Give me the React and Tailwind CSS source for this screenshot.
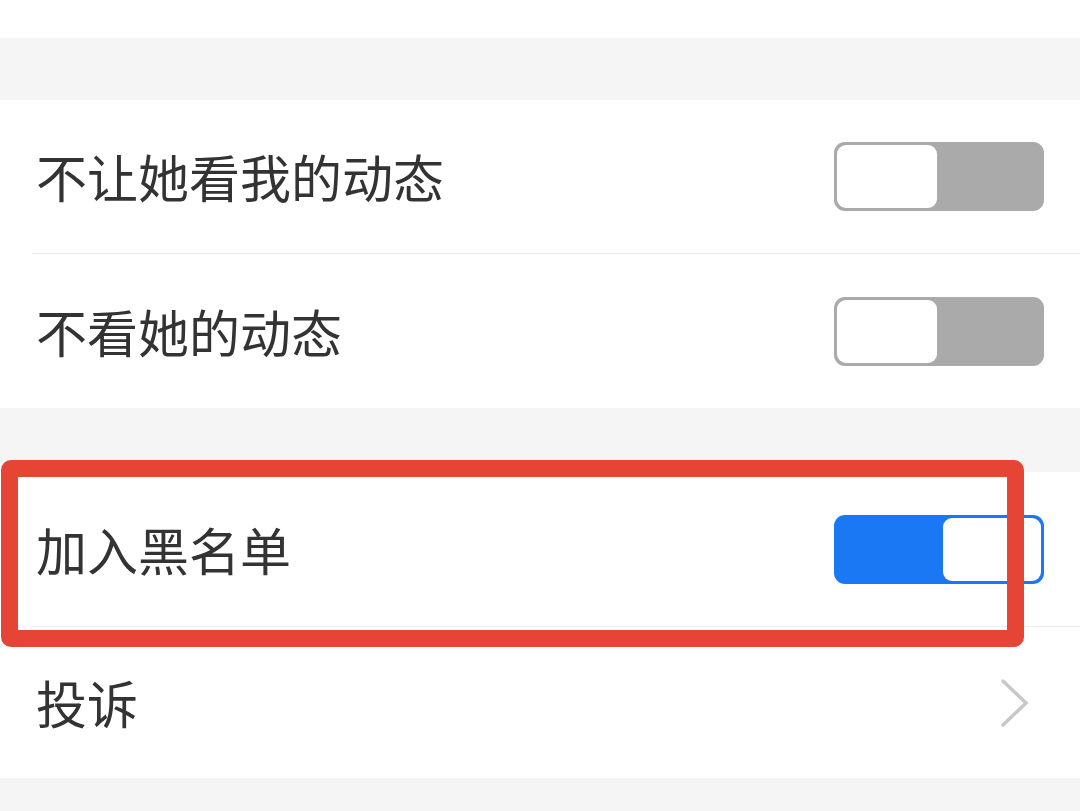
import React from "react";

function Toggle({ on }) {
  if (on) {
    return (
      <div className="w-[210px] h-[69px] bg-[#1a78f5] rounded-[11px] p-[3px] flex justify-end">
        <div className="w-[98px] h-full bg-white rounded-[9px]" />
      </div>
    );
  }
  return (
    <div className="w-[210px] h-[69px] bg-[#aaaaaa] rounded-[11px] p-[3px] flex justify-start">
      <div className="w-[100px] h-full bg-white rounded-[9px]" />
    </div>
  );
}

function Row({ label, children, h }) {
  return (
    <div className={`flex items-center justify-between pl-[36px] pr-[36px] ${h}`}>
      <span className="text-[51px] leading-none text-[#333333]">{label}</span>
      {children}
    </div>
  );
}

export default function App() {
  return (
    <div
      className="relative w-[1080px] h-[811px] bg-[#f5f5f5] overflow-hidden"
      style={{ fontFamily: '"Noto Sans CJK SC", "Noto Sans", sans-serif' }}
    >
      <div className="h-[38px] bg-white" />
      <div className="h-[62px]" />
      <div className="bg-white">
        <Row label="不让她看我的动态" h="h-[153px]">
          <Toggle on={false} />
        </Row>
        <div className="ml-[32px] h-px bg-[#ececec]" />
        <Row label="不看她的动态" h="h-[154px]">
          <Toggle on={false} />
        </Row>
      </div>
      <div className="h-[64px]" />
      <div className="bg-white">
        <Row label="加入黑名单" h="h-[154px]">
          <Toggle on={true} />
        </Row>
        <div className="ml-[32px] h-px bg-[#ececec]" />
        <Row label="投诉" h="h-[151px]">
          <svg width="30" height="50" viewBox="0 0 30 50" className="mr-[14px]">
            <path d="M3 3 L26 25 L3 47" fill="none" stroke="#c8c8c8" strokeWidth="3.5" strokeLinecap="round" strokeLinejoin="miter" />
          </svg>
        </Row>
      </div>
      <div className="absolute left-[1px] top-[460px] w-[1023px] h-[187px] border-[17px] border-[#e64536] rounded-[10px]" />
    </div>
  );
}
